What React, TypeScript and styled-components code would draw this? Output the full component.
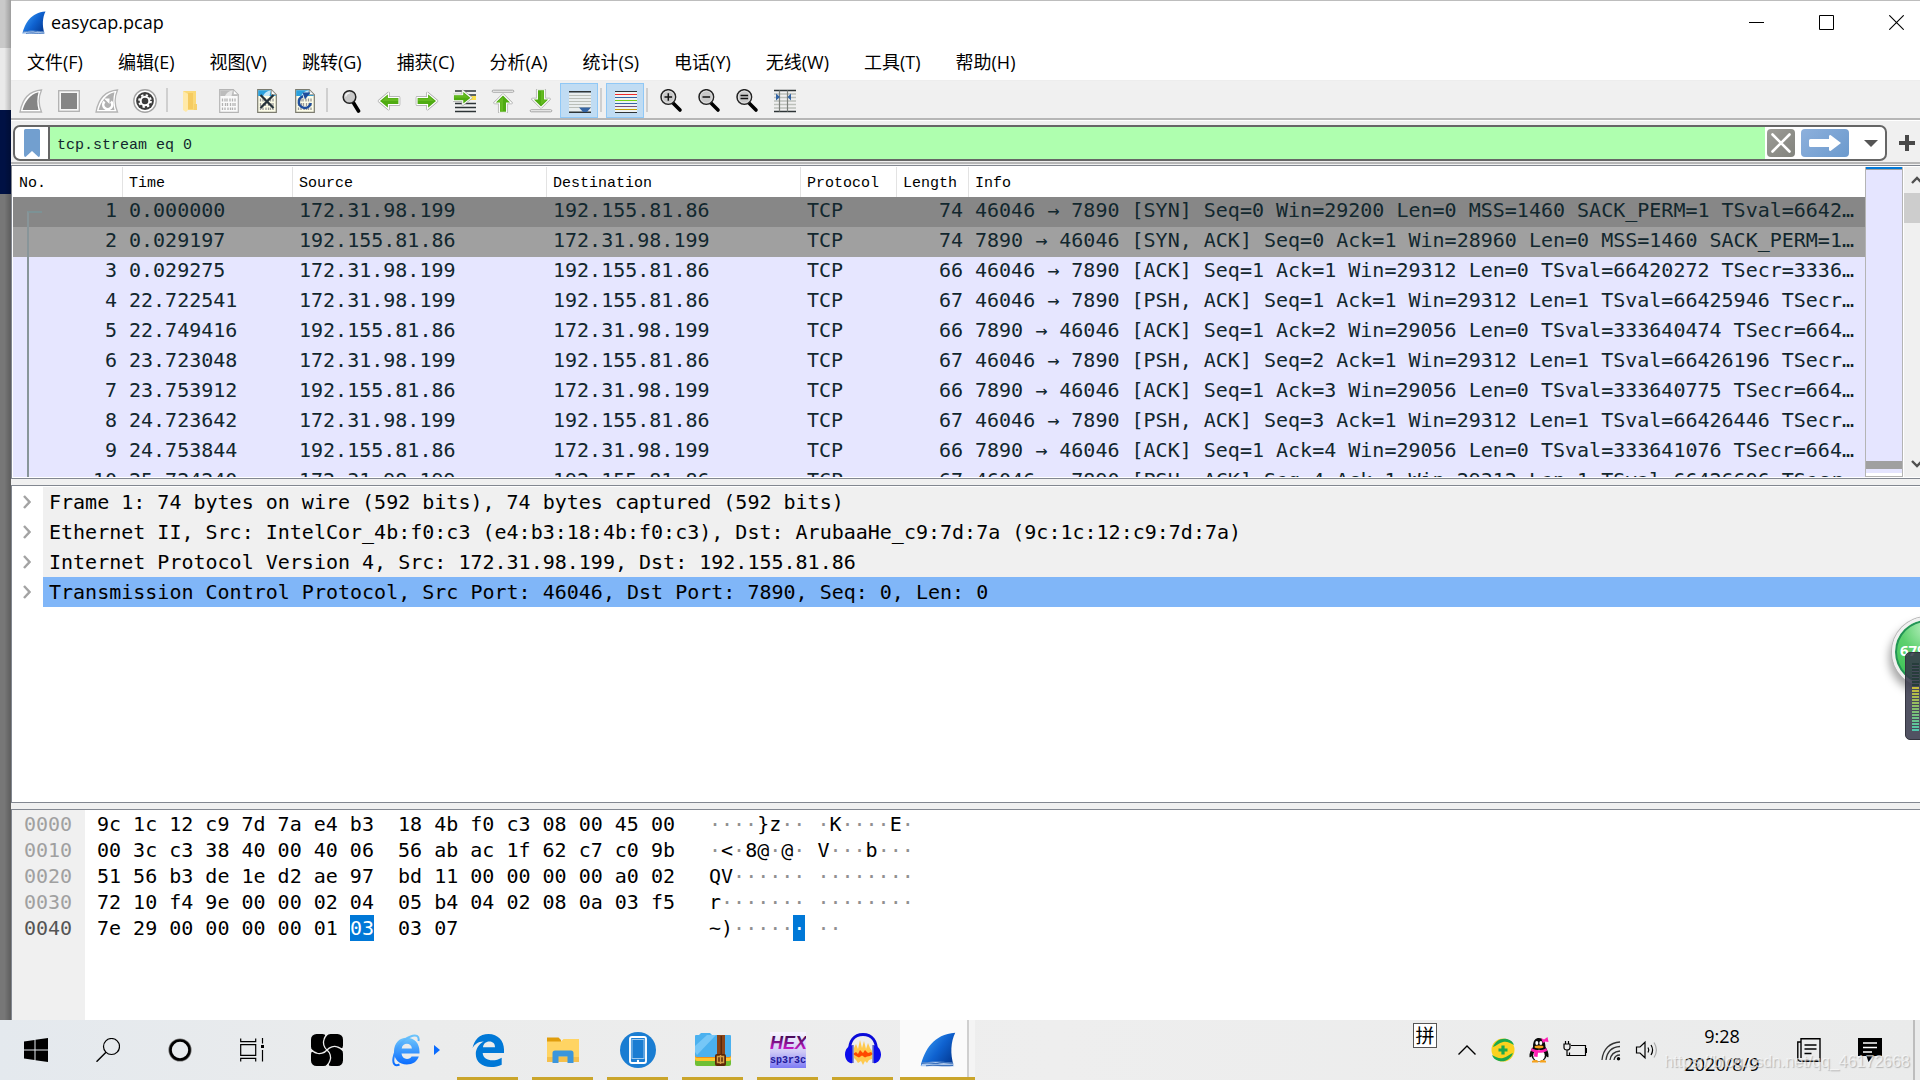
import React from "react";
import styled, { createGlobalStyle } from "styled-components";

const mono = `"DejaVu Sans Mono", "Liberation Mono", monospace`;
const ui = `"Open Sans", "Noto Sans", "Noto Sans CJK SC", sans-serif`;
const thin = `"Liberation Mono", "Noto Sans CJK SC", monospace`;

const GlobalStyle = createGlobalStyle`
  * { box-sizing: border-box; }
  body { margin: 0; overflow: hidden; font-family: ${ui}; font-size: 18px; color: #000; }
  button { border: 0; padding: 0; background: none; font: inherit; color: inherit; }
  svg { display: block; flex: none; }
`;

const Screen = styled.div`
  position: relative;
  display: flex;
  flex-direction: column;
  height: 100vh;
  overflow: hidden;
  background: #777;
`;

const Desk = styled.div`
  flex: 1;
  min-height: 0;
  display: flex;
`;

const Behind = styled.div`
  flex: none;
  width: 11px;
  background:
    linear-gradient(90deg, transparent 40%, rgba(0, 0, 0, 0.22)),
    linear-gradient(#c9c9c9 0 48px, #eaeaea 48px 110px, #001144 110px 194px, #777 194px);
`;

const Window = styled.main`
  flex: 1;
  min-width: 0;
  margin-right: -11px;
  display: flex;
  flex-direction: column;
  background: #fff;
  border-top: 1px solid #bdbdbd;
`;

const TitleBar = styled.header`
  flex: none;
  height: 43px;
  display: flex;
  align-items: center;
  padding-left: 11px;
`;

const Title = styled.h1`
  margin: 0 auto 0 5px;
  padding-bottom: 2px;
  font-size: 18px;
  line-height: 24px;
  font-weight: 400;
`;

const WindowButton = styled.button`
  width: 70px;
  height: 43px;
  display: grid;
  place-items: center;
`;

const MenuBar = styled.nav`
  flex: none;
  height: 37px;
  display: flex;
  align-items: center;
  border-bottom: 1px solid #ededed;
`;

const MenuButton = styled.button`
  padding: 0 19px 0 16px;
  line-height: 26px;
  white-space: nowrap;
`;

const ToolBar = styled.div`
  flex: none;
  display: flex;
  padding: 2px 1px 0;
  background: #f0f0f0;
  border-bottom: 2px solid #b6b6b6;
`;

const ToolButton = styled.button<{ $on?: boolean }>`
  width: 38px;
  height: 35px;
  display: grid;
  place-items: center;
  border: 1px solid ${(p) => (p.$on ? "#90c8f6" : "transparent")};
  background: ${(p) => (p.$on ? "#c0dcf3" : "transparent")};
`;

const ToolSeparator = styled.span`
  width: 2px;
  height: 24px;
  margin: 5px 4px 0 2px;
  background: #cfcfcf;
`;

const FilterBar = styled.form`
  flex: none;
  display: flex;
  align-items: center;
  padding: 4px 12px 1px 2px;
  background: #f0f0f0;
  border-top: 1px solid #fff;
  border-bottom: 2px solid #b6b6b6;
`;

const FilterBox = styled.div`
  flex: 1;
  height: 36px;
  display: flex;
  align-items: center;
  background: #fff;
  border: 2px solid #666;
  border-radius: 7px;
  overflow: hidden;
`;

const BookmarkButton = styled.button`
  width: 35px;
  height: 32px;
  display: grid;
  place-items: center;
  border-right: 2px solid #666;
`;

const FilterInput = styled.input`
  flex: 1;
  min-width: 0;
  height: 32px;
  padding: 5px 7px 0;
  border: 0;
  outline: 0;
  background: #afffaf;
  font: 15px/20px ${thin};
  color: #12272e;
`;

const BoxButton = styled.button<{ $w: number; $bg: string; $gap: number }>`
  width: ${(p) => p.$w}px;
  height: 28px;
  margin-left: ${(p) => p.$gap}px;
  border-radius: 4px;
  background: ${(p) => p.$bg};
  display: grid;
  place-items: center;
`;

const AddButton = styled.button`
  width: 24px;
  height: 32px;
  margin-left: 8px;
  display: grid;
  place-items: center;
`;

const Panes = styled.div`
  flex: 1;
  min-height: 0;
  display: flex;
  flex-direction: column;
  gap: 6px;
  padding-top: 1px;
  background: #f0f0f0;
`;

const Pane = styled.section<{ $share: number }>`
  flex: ${(p) => `${p.$share} 1 ${p.$share}px`};
  min-height: 0;
  overflow: hidden;
  background: #fff;
  border: 1px solid #828790;
  padding-top: 1px;
`;

const ListPane = styled(Pane)`
  display: flex;
  padding: 1px;
`;

const TableClip = styled.div`
  flex: 1;
  min-width: 0;
  overflow: hidden;
`;

const PacketTable = styled.table`
  width: 100%;
  table-layout: fixed;
  border-collapse: separate;
  border-spacing: 0;
  font: 20px/27px ${mono};
  color: #12272e;
`;

const Head = styled.th`
  height: 30px;
  padding: 3px 6px 0;
  border-right: 1px solid #e3e3e3;
  font: 15px/24px ${thin};
  color: #000;
  text-align: left;
  &:last-child { border-right: 0; }
`;

const PacketRow = styled.tr<{ $bg: string }>`
  background: ${(p) => p.$bg};
`;

const Cell = styled.td<{ $right?: boolean }>`
  height: 30px;
  padding: 0 6px 3px;
  text-align: ${(p) => (p.$right ? "right" : "left")};
  white-space: pre;
  overflow: hidden;
  text-overflow: ellipsis;
`;

const NumberCell = styled(Cell)<{ $first: boolean }>`
  position: relative;
  &::before {
    content: "";
    position: absolute;
    left: 14px;
    top: ${(p) => (p.$first ? 14 : 0)}px;
    bottom: 0;
    width: 13px;
    border-left: 2px solid #889599;
    border-top: ${(p) => (p.$first ? "2px solid #7c9295" : "0")};
  }
`;

const MiniMap = styled.div`
  flex: none;
  width: 38px;
  margin-right: 1px;
  background: #e5e5ff;
  border: 1px solid #b4b4b4;
  border-top: 0;
  display: flex;
  flex-direction: column;
  justify-content: space-between;
`;

const MapHead = styled.span`
  height: 3px;
  background: #0078d7;
  border-bottom: 1px solid #a0a0a0;
`;

const MapTail = styled.span`
  height: 15px;
  background: linear-gradient(#a0a0a0 0 8px, #e5e5ff 8px 12px, #fff 12px);
`;

const ScrollBar = styled.div`
  flex: none;
  width: 25px;
  display: flex;
  flex-direction: column;
  background: #f0f0f0;
`;

const ScrollButton = styled.button`
  height: 26px;
  display: grid;
  place-items: center;
`;

const ScrollThumb = styled.div`
  height: 30px;
  margin-bottom: auto;
  background: #cdcdcd;
`;

const Tree = styled.ul`
  margin: 0;
  padding: 0;
  list-style: none;
  font: 20px/30px ${mono};
`;

const TreeRow = styled.li`
  display: flex;
  height: 30px;
`;

const Expander = styled.button`
  width: 31px;
  padding-right: 2px;
  display: grid;
  place-items: center;
`;

const TreeText = styled.span<{ $selected: boolean }>`
  flex: 1;
  padding-left: 6px;
  background: ${(p) => (p.$selected ? "#80b6f8" : "#f0f0f0")};
  white-space: pre;
`;

const HexPane = styled(Pane)`
  display: flex;
  border-bottom: 0;
  font: 20px/26px ${mono};
  background: linear-gradient(90deg, #f0f0f0 73px, #fff 73px);
`;

const HexTable = styled.table`
  border-collapse: collapse;
  align-self: flex-start;
`;

const HexCell = styled.td<{ $w?: number; $tone?: string }>`
  height: 26px;
  width: ${(p) => (p.$w ? `${p.$w}px` : "auto")};
  padding: 0 0 0 12px;
  color: ${(p) => p.$tone || "#000"};
  white-space: pre;
`;

const Mark = styled.mark`
  display: inline-block;
  height: 26px;
  background: #0078d7;
  color: #fff;
`;

const Dim = styled.span`
  color: #909090;
`;

const TaskBar = styled.footer`
  flex: none;
  height: 60px;
  display: flex;
  background: linear-gradient(90deg, #e4e9ee, #ebecec 22%, #eeeeee 55%, #eaebeb);
`;

const TaskButton = styled.button<{ $w: number; $run?: boolean; $active?: boolean; $arrow?: boolean }>`
  width: ${(p) => p.$w}px;
  height: 60px;
  padding-right: ${(p) => (p.$arrow ? 10 : 0)}px;
  display: flex;
  align-items: center;
  justify-content: ${(p) => (p.$arrow ? "flex-end" : "center")};
  gap: 14px;
  background: ${(p) => {
    const line = "linear-gradient(#caa52b, #caa52b)";
    if (p.$active) return `${line} 0 100% / 100% 3px no-repeat, linear-gradient(90deg, #fafafa 67px, #cfcfcf 67px 69px, #f4f4f4 69px)`;
    return p.$run ? `${line} 50% 100% / 61px 3px no-repeat` : "none";
  }};
`;

const Tray = styled.div`
  margin-left: auto;
  display: flex;
  align-items: center;
`;

const ImeButton = styled.button`
  align-self: flex-start;
  width: 24px;
  height: 25px;
  margin: 3px 12px 0 0;
  border: 1px solid #555;
  background: #fff;
  font-size: 19px;
  line-height: 22px;
`;

const TrayButton = styled.button<{ $w: number }>`
  width: ${(p) => p.$w}px;
  height: 60px;
  display: grid;
  place-items: center;
`;

const Clock = styled.time`
  width: 114px;
  font-size: 18px;
  line-height: 28px;
  text-align: center;
`;

const ShowDesktop = styled.button`
  width: 7px;
  height: 60px;
  margin-left: 12px;
  border-left: 2px solid #bdbdbd;
`;

const Watermark = styled.span`
  position: absolute;
  right: 10px;
  bottom: 8px;
  font: 16px/20px "Liberation Sans", sans-serif;
  color: rgba(255, 255, 255, 0.6);
  text-shadow: 1px 1px 1px rgba(120, 120, 120, 0.45);
  pointer-events: none;
`;

const Ball = styled.div`
  position: absolute;
  right: -42px;
  top: 617px;
  width: 70px;
  height: 70px;
  padding-left: 5px;
  border: 3px solid #f0f0f0;
  border-radius: 50%;
  background: radial-gradient(circle at 50% 12%, #b9f0c0, #5dd06e 40%, #2fc04a);
  box-shadow: 0 0 0 1px #b5b5b5, inset 0 0 0 2px #239356, -3px 6px 9px rgba(0, 0, 0, 0.35);
  color: #fff;
  font: 700 15px/60px ${ui};
`;

const Meter = styled.div`
  position: absolute;
  right: -10px;
  top: 652px;
  width: 25px;
  height: 88px;
  padding: 10px 0 0 6px;
  border: 1px solid #34353f;
  border-radius: 5px;
  background: rgba(52, 54, 72, 0.86);
`;

const MeterBars = styled.div`
  width: 7px;
  height: 68px;
  background:
    repeating-linear-gradient(transparent 0 2px, #474a5b 2px 3px),
    linear-gradient(#263d3b 0 23px, #cbbb35 23px, #7fbf72 48px, #4fc7ae);
`;

const Fin = ({ size, id }: { size: number; id: string }) => (
  <svg width={size} height={size} viewBox="0 0 24 24" aria-hidden="true">
    <defs>
      <linearGradient id={id} x1="0" y1="0.2" x2="1" y2="0.9">
        <stop offset="0" stopColor="#3b9df5" />
        <stop offset="0.5" stopColor="#0f62d0" />
        <stop offset="1" stopColor="#02358c" />
      </linearGradient>
    </defs>
    <path d="M.5 22.500C3 12 9 1.500 23.500.5c-3 6-3.500 14-1 22Z" fill={`url(#${id})`} />
    <path d="M1.500 20.500c5-1 13-1 21 0l.3 2.500H.7Z" fill="#c9dcf4" opacity=".85" />
    <path d="M1 21c6-1.500 8 1 12-.4 4-1 6 .4 9 .2M4 22.500c5-1 10 .5 18-.3" stroke="#3c72bd" strokeWidth=".8" fill="none" />
  </svg>
);

const Svg24 = ({ children }: { children: React.ReactNode }) => (
  <svg width="24" height="24" viewBox="0 0 24 24" aria-hidden="true">{children}</svg>
);

const finPath = "M1 23C3 12 9 2 22.500 1c-3 7-3 15 0 22Z";
const finInner = "M3.600 21C6 13 10.500 5.500 19.500 3.300c-1.600 6-1.600 12 0 17.700Z";

const IconStart = () => (
  <Svg24><path d={finPath} fill="#fff" stroke="#b4b4b4" strokeWidth="1.300" /><path d={finInner} fill="#858585" /></Svg24>
);
const IconStop = () => (
  <Svg24><rect x="1.700" y="1.700" width="20.600" height="20.600" fill="#f8f8f8" stroke="#b0b0b0" strokeWidth="1.300" /><rect x="4" y="4" width="16" height="16" fill="#868686" /></Svg24>
);
const IconRestart = () => (
  <Svg24>
    <path d={finPath} fill="#fff" stroke="#b4b4b4" strokeWidth="1.300" />
    <path d={finInner} fill="#b0b0b0" />
    <path d="M9.500 12.500a4.500 4.500 0 1 0 6.500 0" fill="none" stroke="#fff" strokeWidth="2.600" />
    <path d="M9 9.500h5.500v5.500Z" fill="#fff" />
  </Svg24>
);
const IconOptions = () => (
  <Svg24>
    <circle cx="12" cy="12" r="11.200" fill="#fff" stroke="#a4a4a4" strokeWidth="1.400" />
    <circle cx="12" cy="12" r="8.900" fill="#3c3c3c" />
    <circle cx="12" cy="12" r="4.300" fill="none" stroke="#fff" strokeWidth="2" />
    <circle cx="12" cy="12" r="5.900" fill="none" stroke="#fff" strokeWidth="2" strokeDasharray="2.300 2.334" />
    <circle cx="12" cy="12" r="2.300" fill="#3c3c3c" />
  </Svg24>
);
const IconFolder = () => (
  <Svg24>
    <path d="M4 2h13v19H7Z" fill="#fad978" />
    <path d="M4 2l5 3v16l-2 2-3-2Z" fill="#ffe9a8" />
    <path d="M9 4h5v16H9Z" fill="#f5cb60" />
    <path d="M15 15h3v6h-3Z" fill="#f6d06c" />
  </Svg24>
);
const Digits = ({ c }: { c: string }) => (
  <path
    d="M5.500 9.500v3M8 9.500v3M10 9.500v3M13 9.500v3M15.500 9.500v3M18 9.500v3M5.500 14v3M8.500 14v3M10.500 14v3M13.500 14v3M16 14v3M18 14v3M5.500 18.500v2.500M8 18.500v2.500M11 18.500v2.500M13.500 18.500v2.500M15.500 18.500v2.500M18 18.500v2.500"
    stroke={c} strokeWidth="1.300" fill="none"
  />
);
const Doc = ({ gray, children }: { gray?: boolean; children?: React.ReactNode }) => (
  <Svg24>
    <path d="M2.700.7h13.600l5 5v17.600H2.700Z" fill={gray ? "#fafafa" : "#fdfde8"} stroke={gray ? "#b5b5b5" : "#7c7c70"} strokeWidth="1.200" />
    <path d="M3.200 1.200h13v4.500h4.500V7H3.200Z" fill={gray ? "#bcbcbc" : "#2aa0dd"} />
    <path d="M8 7c1-3 4-5 8-5.800L14.500 7Z" fill={gray ? "#e6e6e6" : "#c3e6f7"} />
    <path d="M16.300.7v5h5Z" fill="#fff" stroke={gray ? "#b5b5b5" : "#8d8d86"} strokeWidth=".9" />
    <Digits c={gray ? "#b3b3b3" : "#999"} />
    {children}
  </Svg24>
);
const IconClose = () => (
  <Doc><path d="M5.500 6l13 13M18.500 6l-13 13" stroke="#26323a" strokeWidth="2.300" /></Doc>
);
const IconReload = () => (
  <Doc>
    <path d="M10 7.200a6 6 0 1 0 7.700 6.800" fill="none" stroke="#1f4e9c" strokeWidth="2.500" />
    <path d="M9.500 3.500h8l-5.500 7Z" fill="#1f4e9c" />
  </Doc>
);
const Lens = ({ d, big }: { d?: string; big?: boolean }) => (
  <Svg24>
    <path d={big ? "M14 13l5.500 9" : "M14.500 14.500l6.500 6.500"} stroke="#000" strokeWidth="3.600" strokeLinecap="round" />
    <circle cx={big ? 10.500 : 9.300} cy="8" r={big ? 6.300 : 7.300} fill="#c9c9c9" stroke="#222" strokeWidth="1.500" />
    {!big && <circle cx="9.300" cy="8" r="5.900" fill="none" stroke="#dedede" strokeWidth="1" />}
    {big && <path d="M6.700 7.500a4 4 0 0 1 4-3.500" stroke="#f4f4f4" strokeWidth="1.600" fill="none" />}
    {d && <path d={d} stroke="#111" strokeWidth="1.500" />}
  </Svg24>
);
const arrowRight = "M2 8.500h10.500V4L22 12l-9.500 8v-4.500H2Z";
const ArrowShape = ({ t }: { t?: string }) => (
  <g transform={t}>
    <path d={arrowRight} fill="#fff" stroke="#a6a6a6" strokeWidth="2.600" strokeLinejoin="round" />
    <path d={arrowRight} fill="#4fab12" stroke="#fff" strokeWidth="1.200" />
    <path d="M3 9.500h10.500V6.500L19 12H3Z" fill="#72c52a" opacity=".6" />
  </g>
);
const IconGoto = () => (
  <Svg24>
    <path d="M2 2h21M2 6h21M2 14.500h21M2 18.500h21M2 22.500h21M12 10h11" stroke="#2d3436" strokeWidth="1.300" />
    <path d="M15 7h8v4h-8Z" fill="#fbe04a" />
    <ArrowShape t="translate(-1.500 -1.500) scale(.9 .86)" />
  </Svg24>
);
const IconTop = () => (
  <Svg24>
    <ArrowShape t="translate(-.6 25) rotate(-90) scale(.88 1.050)" />
    <rect x="1.200" y="1.200" width="21.600" height="2" rx="1" fill="#fff" stroke="#a0a0a0" />
  </Svg24>
);
const IconBottom = () => (
  <Svg24>
    <ArrowShape t="translate(24.600 -1) rotate(90) scale(.88 1.050)" />
    <rect x="1.200" y="20.800" width="21.600" height="2" rx="1" fill="#fff" stroke="#a0a0a0" />
  </Svg24>
);
const IconAutoScroll = () => (
  <Svg24>
    <path d="M2 3.500h22v20H2Z" fill="#e9eeee" />
    <path d="M2 6.500h22M2 9.500h22M2 12.500h22M2 15.500h22M2 18.500h22" stroke="#b9beb8" strokeWidth="1.200" />
    <path d="M2 2.700h22M2 23.300h22" stroke="#2d3436" strokeWidth="1.400" />
    <path d="M12 18.500h12L20 23h-4Z" fill="#3465a4" />
  </Svg24>
);
const IconColorize = () => (
  <Svg24>
    <path d="M2 2.700h22v20.600H2Z" fill="#eef2f4" />
    {["#2d3436", "#ef2929", "#3465a4", "#73d216", "#3465a4", "#75507b", "#c4a000", "#2d3436"].map((c, i) => (
      <path key={i} d={`M2 ${2.5 + i * 3}h22`} stroke={c} strokeWidth="1" shapeRendering="crispEdges" />
    ))}
  </Svg24>
);
const IconResize = () => (
  <Svg24>
    <path d="M1 1.500h22M1 22.500h22" stroke="#2d3436" strokeWidth="1.300" />
    <path d="M1 5h22M1 8.500h22M1 12h22M1 15.500h22M1 19h22" stroke="#bcc0ba" strokeWidth="1.300" />
    <path d="M6.500 1.500v21M14.500 1.500v21" stroke="#7d817c" strokeWidth="1.200" />
    <path d="M3 4.500l4 3.500-4 3.500ZM18 4.500L14.500 8l3.500 3.500Z" fill="#3465a4" />
  </Svg24>
);

const tools: Array<[string, React.ReactNode, boolean?] | null> = [
  ["开始捕获", <IconStart />],
  ["停止捕获", <IconStop />],
  ["重新开始", <IconRestart />],
  ["捕获选项", <IconOptions />],
  null,
  ["打开", <IconFolder />],
  ["保存", <Doc gray />],
  ["关闭文件", <IconClose />],
  ["重新加载", <IconReload />],
  null,
  ["查找", <Lens big />],
  ["后退", <Svg24><ArrowShape t="translate(24 0) scale(-1 1)" /></Svg24>],
  ["前进", <Svg24><ArrowShape /></Svg24>],
  ["转到分组", <IconGoto />],
  ["首个分组", <IconTop />],
  ["最新分组", <IconBottom />],
  ["自动滚动", <IconAutoScroll />, true],
  null,
  ["着色", <IconColorize />, true],
  null,
  ["放大", <Lens d="M5.500 8h7.600M9.300 4.200v7.600" />],
  ["缩小", <Lens d="M5.500 8h7.600" />],
  ["正常大小", <Lens d="M5.500 6.500h7.600M5.500 9.500h7.600" />],
  ["调整列宽", <IconResize />],
];

const menus = ["文件(F)", "编辑(E)", "视图(V)", "跳转(G)", "捕获(C)", "分析(A)", "统计(S)", "电话(Y)", "无线(W)", "工具(T)", "帮助(H)"];

const columns: Array<[string, number | undefined]> = [
  ["No.", 110], ["Time", 170], ["Source", 254], ["Destination", 254], ["Protocol", 96], ["Length", 72], ["Info", undefined],
];

const A = "172.31.98.199";
const B = "192.155.81.86";
const packets = [
  ["1", "0.000000", A, B, "74", "46046 → 7890 [SYN] Seq=0 Win=29200 Len=0 MSS=1460 SACK_PERM=1 TSval=6642…"],
  ["2", "0.029197", B, A, "74", "7890 → 46046 [SYN, ACK] Seq=0 Ack=1 Win=28960 Len=0 MSS=1460 SACK_PERM=1…"],
  ["3", "0.029275", A, B, "66", "46046 → 7890 [ACK] Seq=1 Ack=1 Win=29312 Len=0 TSval=66420272 TSecr=3336…"],
  ["4", "22.722541", A, B, "67", "46046 → 7890 [PSH, ACK] Seq=1 Ack=1 Win=29312 Len=1 TSval=66425946 TSecr…"],
  ["5", "22.749416", B, A, "66", "7890 → 46046 [ACK] Seq=1 Ack=2 Win=29056 Len=0 TSval=333640474 TSecr=664…"],
  ["6", "23.723048", A, B, "67", "46046 → 7890 [PSH, ACK] Seq=2 Ack=1 Win=29312 Len=1 TSval=66426196 TSecr…"],
  ["7", "23.753912", B, A, "66", "7890 → 46046 [ACK] Seq=1 Ack=3 Win=29056 Len=0 TSval=333640775 TSecr=664…"],
  ["8", "24.723642", A, B, "67", "46046 → 7890 [PSH, ACK] Seq=3 Ack=1 Win=29312 Len=1 TSval=66426446 TSecr…"],
  ["9", "24.753844", B, A, "66", "7890 → 46046 [ACK] Seq=1 Ack=4 Win=29056 Len=0 TSval=333641076 TSecr=664…"],
  ["10", "25.724240", A, B, "67", "46046 → 7890 [PSH, ACK] Seq=4 Ack=1 Win=29312 Len=1 TSval=66426696 TSecr…"],
];

const details = [
  "Frame 1: 74 bytes on wire (592 bits), 74 bytes captured (592 bits)",
  "Ethernet II, Src: IntelCor_4b:f0:c3 (e4:b3:18:4b:f0:c3), Dst: ArubaaHe_c9:7d:7a (9c:1c:12:c9:7d:7a)",
  "Internet Protocol Version 4, Src: 172.31.98.199, Dst: 192.155.81.86",
  "Transmission Control Protocol, Src Port: 46046, Dst Port: 7890, Seq: 0, Len: 0",
];

const dump = [
  ["0000", "9c 1c 12 c9 7d 7a e4 b3  18 4b f0 c3 08 00 45 00", "····}z·· ·K····E·"],
  ["0010", "00 3c c3 38 40 00 40 06  56 ab ac 1f 62 c7 c0 9b", "·<·8@·@· V···b···"],
  ["0020", "51 56 b3 de 1e d2 ae 97  bd 11 00 00 00 00 a0 02", "QV······ ········"],
  ["0030", "72 10 f4 9e 00 00 02 04  05 b4 04 02 08 0a 03 f5", "r······· ········"],
  ["0040", "7e 29 00 00 00 00 01 03  03 07", "~)······ ··"],
];

const withDots = (s: string) =>
  s.split(/(·+)/).map((part, i) => (part.startsWith("·") ? <Dim key={i}>{part}</Dim> : part));

const marked = (s: string, from: number, to: number, dots: boolean) => (
  <>
    {dots ? withDots(s.slice(0, from)) : s.slice(0, from)}
    <Mark>{s.slice(from, to)}</Mark>
    {dots ? withDots(s.slice(to)) : s.slice(to)}
  </>
);

const Chevron = ({ d }: { d: string }) => (
  <svg width="14" height="14" viewBox="0 0 14 14" aria-hidden="true">
    <path d={d} fill="none" stroke="#505050" strokeWidth="2.400" />
  </svg>
);

const TaskIcon = ({ size = 36, children }: { size?: number; children: React.ReactNode }) => (
  <svg width={size} height={size} viewBox="0 0 36 36" aria-hidden="true">{children}</svg>
);

const WindowsLogo = () => (
  <Svg24><path d="M0 3.400l10.500-1.400v9.500H0ZM11.500 1.800L24 0v11.500H11.500ZM0 12.500h10.500V22L0 20.600ZM11.500 12.500H24V24l-12.500-1.800Z" /></Svg24>
);
const SearchGlyph = () => (
  <Svg24><circle cx="15.500" cy="8.500" r="8" fill="none" stroke="#000" strokeWidth="1.200" /><path d="M10 14.200L.5 23.700" stroke="#000" strokeWidth="1.500" /></Svg24>
);
const Cortana = () => (
  <Svg24><circle cx="12" cy="12" r="10.600" fill="none" stroke="#777" strokeWidth="2" /><circle cx="12" cy="12" r="9.500" fill="none" stroke="#000" strokeWidth="2.600" /></Svg24>
);
const TaskView = () => (
  <Svg24>
    <path d="M.7.5v3.200h15V.5M.7 23.500v-3.200h15v3.200M.7 6.700h15v10.600H.7ZM22.500 0v5.500M22.500 12v11.500" fill="none" stroke="#000" strokeWidth="1.200" />
    <rect x="21" y="7" width="3" height="3" />
  </Svg24>
);
const Swirl = () => (
  <TaskIcon>
    {[0, 90, 180, 270].map((r) => (
      <rect key={r} transform={`rotate(${r} 18 18)`} x="16" y="2" width="18" height="17" rx="5.500" />
    ))}
    {[0, 90, 180, 270].map((r) => (
      <g key={r} transform={`rotate(${r} 18 18)`}>
        <path d="M18 18C15 15.500 13.500 11 15 7.500 15.500 5.500 16.500 4 18 2.500" fill="none" stroke="#ececec" strokeWidth="1.300" />
        <path d="M15.500 1h4.500l-3.500 4Z" fill="#ececec" />
      </g>
    ))}
  </TaskIcon>
);
const IE = () => (
  <svg width="28" height="34" viewBox="0 0 28 34" aria-hidden="true">
    <defs><linearGradient id="ie" x1="0" y1="0" x2="0" y2="1"><stop offset="0" stopColor="#6cc4fb" /><stop offset="1" stopColor="#0a6cff" /></linearGradient></defs>
    <path fillRule="evenodd" fill="url(#ie)" d="M2 18.500C2 10 7.500 4.800 14.500 4.800c8 0 13 5.700 13 13.700v2H9.500c.4 3.600 2.500 5.400 5.500 5.400 2.300 0 3.800-1 4.600-2.500h7.200c-1.600 5-6.200 8-12 8C7 31.400 2 26.500 2 18.500Zm7.700-3.100h10.200c-.4-3-2.300-4.600-5-4.600s-4.700 1.600-5.200 4.600Z" />
    <path d="M26.500 8c1-5-2.500-7-8-4.500C10 7 3 16 1.500 25c-1 6 1.500 8.500 6 6.500" fill="none" stroke="url(#ie)" strokeWidth="2" />
  </svg>
);
const EdgeLogo = () => (
  <TaskIcon>
    <path fill="#0078d7" d="M2.500 16.500C4 8 9.500 2 18.500 2 28 2 34 9 34 17.500V21H12.700c.3 5 4.600 7.300 9.500 7.300 3.700 0 6.800-1 9.500-2.600v7C28.500 34.300 25 35 21 35 11.500 35 5.800 29.500 5.800 22c0-5 3-9.700 8-12.400C7.500 9.500 4.200 13 2.500 16.500ZM13 15.300h12c0-3.500-2-5.700-5.600-5.700S13.300 12 13 15.300Z" />
  </TaskIcon>
);
const Explorer = () => (
  <TaskIcon>
    <path d="M2 5.500h11.500L16 8v4H2Z" fill="#e09d0c" />
    <path d="M2 9.500h14L18.500 7H34v23H2Z" fill="#ffd463" />
    <path d="M2 25h32v5H2Z" fill="#f5c04b" />
    <path d="M7.500 31V21q0-2.500 2.500-2.500h16q2.500 0 2.500 2.500v10h-6v-6.500h-9V31Z" fill="#3a96dd" />
  </TaskIcon>
);
const Phone = () => (
  <TaskIcon>
    <circle cx="18" cy="18" r="18" fill="#1a7dd2" />
    <rect x="10" y="5" width="16" height="26" rx="2" fill="#1a7dd2" stroke="#fff" strokeWidth="1.900" />
    <rect x="12" y="7.500" width="12" height="19" fill="none" stroke="#9cc9ee" />
    <circle cx="18" cy="29" r="1.200" fill="#fff" />
  </TaskIcon>
);
const Archive = () => (
  <TaskIcon>
    <rect y="24" width="36" height="10" rx="2" fill="#6fbf35" />
    <rect y="22" width="36" height="7" rx="2" fill="#ffc52e" />
    <rect y="20" width="36" height="6" rx="2" fill="#f39117" />
    <path d="M0 4q0-1 1-1h3l2-2h9l2 2h18q1 0 1 1v19q0 2-2 2H2q-2 0-2-2Z" fill="#4bb1ef" />
    <path d="M0 14L12 3h9L2 23l-2-3Z" fill="#8dd3fa" opacity=".65" />
    <rect x="22" y="3" width="8" height="21" fill="#8a4518" />
    <rect x="25.500" y="4" width="1.500" height="18" fill="#5a280a" />
    <rect x="20" y="22" width="11" height="12" rx="2" fill="#5b2808" />
    <path d="M22.500 24.500h6v6h-6ZM25.500 23v9" fill="none" stroke="#d6a046" strokeWidth="1.500" />
  </TaskIcon>
);
const HexLogo = () => (
  <TaskIcon>
    <defs>
      <linearGradient id="hx" x1="0" y1="0" x2="0" y2="1"><stop offset="0" stopColor="#f7f4ff" /><stop offset=".55" stopColor="#cfc9f6" /><stop offset="1" stopColor="#7d7bf5" /></linearGradient>
      <linearGradient id="ht" x1="0" y1="0" x2="0" y2="1"><stop offset=".2" stopColor="#4b0a5c" /><stop offset="1" stopColor="#ee1be8" /></linearGradient>
    </defs>
    <rect width="36" height="36" fill="url(#hx)" />
    <text x="0" y="17" fontFamily="Liberation Sans" fontWeight="700" fontStyle="italic" fontSize="18" fill="url(#ht)">HEX</text>
    <text x="0" y="31" fontFamily="Liberation Mono" fontWeight="700" fontSize="10" fill="#241a9c">sp3r3c</text>
  </TaskIcon>
);
const Audacity = () => (
  <TaskIcon>
    <path d="M9 26V16l2-4 2 5 2-9 2 8 2-7 2 8 2-6 2 5 2 3v8l-3 1-2 3-2-2-2 4-2-4-3 2-2-3Z" fill="#ffc94d" />
    <path d="M8 22l3-2 2 2 2-4 3 3 2-3 3 3 3-1 2 2-3 2-3 .5-2 1-3-2-3 2-3-1.500Z" fill="#ff4a00" />
    <path d="M4.500 20C4 9 9 2.500 18 2.500S32 9 31.500 20" fill="none" stroke="#0a0ad8" strokeWidth="2.800" />
    <path d="M8 13v18C3 32 0 27 0 22.500 0 17 4 13 8 13ZM28 13v18c5 1 8-4 8-8.500C36 17 32 13 28 13Z" fill="#0c0cec" />
    <path d="M8 13v18M28 13v18" stroke="#6d74c8" strokeWidth="1.500" />
  </TaskIcon>
);

const tasks: Array<[string, React.ReactNode]> = [
  ["Edge", <EdgeLogo />],
  ["资源管理器", <Explorer />],
  ["手机", <Phone />],
  ["压缩", <Archive />],
  ["HEX", <HexLogo />],
  ["Audacity", <Audacity />],
];

const Guard = () => (
  <Svg24>
    <circle cx="12" cy="12" r="11.500" fill="#fbd21e" />
    <path d="M2 9C4 3 10-.5 16 1c4 1 6 3 7 6-4-2-7-4-11-3S5 8 2 9ZM22 15c-2 6-8 9.500-14 8-4-1-6-3-7-6 4 2 7 4 11 3s7-4 10-5Z" fill="#1ca84c" />
    <path d="M12 7.500v9M7.500 12h9" stroke="#1ca84c" strokeWidth="3.200" />
  </Svg24>
);
const Penguin = () => (
  <svg width="20" height="26" viewBox="0 0 20 26" aria-hidden="true">
    <path d="M4 10C4 3 6.500 1 10 1s6.500 3 6.500 9c2 3 3.500 6.500 3 10-1 1-2-1-2-1-1 4-4 5.500-7.500 5.500S3.500 23 2.500 19c0 0-1 2-2 1-.5-4 1.500-7 3.500-10Z" fill="#0a0a0a" />
    <ellipse cx="10" cy="18.500" rx="5.800" ry="5.800" fill="#fff" />
    <ellipse cx="7.800" cy="6" rx="1.500" ry="2" fill="#fff" /><ellipse cx="11.800" cy="6" rx="1.500" ry="2" fill="#fff" />
    <ellipse cx="10" cy="10" rx="4.500" ry="1.400" fill="#f6a21b" />
    <path d="M2.500 11c5 3 10 3 15 0l.5 3c-3 1.500-6 2-9 1.800L8.500 20 5 19.500l.3-4.300L2 14Z" fill="#ff1fb4" />
    <path d="M12 1l3 1.500L18.500 0l1 5-3.500-.5-2 1.500Z" fill="#ff1fb4" />
    <path d="M3 24c2-1.500 5-1.500 6.500.5l-.5 1H3ZM17 24c-2-1.500-5-1.500-6.500.5l.5 1h6Z" fill="#f6a21b" />
  </svg>
);
const Battery = () => (
  <Svg24>
    <path d="M8 7.500h14.500v10H6.500v-3M22.500 10.500h1.200v4h-1.200M1 6h6v3.500Q7 12 4 12T1 9.500ZM2.500 6V3M5.500 6V3M4 12v5.500h2.500" fill="none" stroke="#000" strokeWidth="1.200" />
  </Svg24>
);
const Wifi = () => (
  <Svg24>
    <path d="M3 22C4 11 11 4.500 21 4M7 22c1-8 6-13 14-13.500M11 22c.7-5 4.500-8.500 10-9" fill="none" stroke="#333" strokeWidth="1.300" />
    <path d="M15 22c.5-3 2.500-5 6-5" fill="none" stroke="#333" strokeWidth="1.300" />
    <circle cx="19.500" cy="20.800" r="1.700" />
  </Svg24>
);
const Volume = () => (
  <Svg24>
    <path d="M1.500 9h3.500l5-4.800v15.600L5 15H1.500Z" fill="none" stroke="#000" strokeWidth="1.200" />
    <path d="M13 9.500q1.600 2.500 0 5M16 7q3.200 5 0 10" fill="none" stroke="#000" strokeWidth="1.200" />
    <path d="M19 4.500q4.800 7.500 0 15" fill="none" stroke="#aaa" strokeWidth="1.200" />
  </Svg24>
);
const News = () => (
  <Svg24>
    <path d="M4 .8h19v22.400H3.500Q.8 23.200.8 20V4H4ZM4 4v16" fill="none" stroke="#000" strokeWidth="1.400" />
    <path d="M7.500 7h12M7.500 11h12M7.500 15.500h7" stroke="#000" strokeWidth="1.400" />
  </Svg24>
);
const Notice = () => (
  <Svg24>
    <path d="M0 0h24v18h-8.500l-5 6L8.500 18H0Z" />
    <path d="M5 5h14M5 9.500h14M5 14h9" stroke="#fff" strokeWidth="1.300" />
  </Svg24>
);

export default function App() {
  return (
    <Screen>
      <GlobalStyle />
      <Desk>
        <Behind />
        <Window>
          <TitleBar>
            <Fin size={24} id="finSmall" />
            <Title>easycap.pcap</Title>
            <WindowButton aria-label="最小化">
              <svg width="15" height="15" viewBox="0 0 15 15"><path d="M0 7.500h15" stroke="#000" /></svg>
            </WindowButton>
            <WindowButton aria-label="最大化">
              <svg width="15" height="15" viewBox="0 0 15 15"><path d="M.5.5h14v14H.5Z" fill="none" stroke="#000" /></svg>
            </WindowButton>
            <WindowButton aria-label="关闭">
              <svg width="15" height="15" viewBox="0 0 15 15"><path d="M.3.3l14.400 14.400M14.700.3L.3 14.700" stroke="#000" strokeWidth="1.100" /></svg>
            </WindowButton>
          </TitleBar>
          <MenuBar>{menus.map((m) => <MenuButton key={m}>{m}</MenuButton>)}</MenuBar>
          <ToolBar>
            {tools.map((t, i) =>
              t ? <ToolButton key={i} aria-label={t[0]} $on={t[2]}>{t[1]}</ToolButton> : <ToolSeparator key={i} />
            )}
          </ToolBar>
          <FilterBar onSubmit={(e) => e.preventDefault()}>
            <FilterBox>
              <BookmarkButton type="button" aria-label="书签">
                <svg width="16" height="28" viewBox="0 0 16 28"><path d="M0 1.500Q0 0 1.500 0h13Q16 0 16 1.500V26q0 2-1.500 2L8 22 1.500 28Q0 28 0 26Z" fill="#729fcf" /></svg>
              </BookmarkButton>
              <FilterInput aria-label="显示过滤器" defaultValue="tcp.stream eq 0" spellCheck={false} />
              <BoxButton type="button" aria-label="清除" $w={28} $gap={2} $bg="linear-gradient(135deg, #9c9c97, #82837d)">
                <svg width="20" height="20" viewBox="0 0 20 20"><path d="M1.500 1.500l17 17M18.500 1.500l-17 17" stroke="#fff" strokeWidth="2.600" strokeLinecap="round" /></svg>
              </BoxButton>
              <BoxButton type="submit" aria-label="应用" $w={48} $gap={6} $bg="linear-gradient(135deg, #8db0dc, #6c9acd)">
                <svg width="32" height="16" viewBox="0 0 32 16"><path d="M1.500 4H20V1.200Q20 0 21.500 0L32 8l-10.500 8Q20 16 20 14.800V12H1.500Q0 12 0 10.500v-5Q0 4 1.500 4Z" fill="#fff" /></svg>
              </BoxButton>
              <BoxButton type="button" aria-label="历史" $w={28} $gap={8} $bg="none">
                <svg width="14" height="7" viewBox="0 0 14 7"><path d="M0 0h14L7 7Z" fill="#555" /></svg>
              </BoxButton>
            </FilterBox>
            <AddButton type="button" aria-label="添加">
              <svg width="16" height="16" viewBox="0 0 16 16"><path d="M8 0v16M0 8h16" stroke="#484848" strokeWidth="4" /></svg>
            </AddButton>
          </FilterBar>
          <Panes>
            <ListPane $share={314}>
              <TableClip>
                <PacketTable>
                  <colgroup>
                    {columns.map(([name, w]) => <col key={name} width={w} />)}
                  </colgroup>
                  <thead>
                    <tr>{columns.map(([name]) => <Head key={name}>{name}</Head>)}</tr>
                  </thead>
                  <tbody>
                    {packets.map(([no, time, src, dst, len, info], i) => (
                      <PacketRow key={no} $bg={i === 0 ? "#878787" : i === 1 ? "#a0a0a0" : "#e6e6ff"}>
                        <NumberCell $right $first={i === 0}>{no}</NumberCell>
                        <Cell>{time}</Cell>
                        <Cell>{src}</Cell>
                        <Cell>{dst}</Cell>
                        <Cell>TCP</Cell>
                        <Cell $right>{len}</Cell>
                        <Cell>{info}</Cell>
                      </PacketRow>
                    ))}
                  </tbody>
                </PacketTable>
              </TableClip>
              <MiniMap><MapHead /><MapTail /></MiniMap>
              <ScrollBar>
                <ScrollButton aria-label="向上"><Chevron d="M2 10l5-5 5 5" /></ScrollButton>
                <ScrollThumb />
                <ScrollButton aria-label="向下"><Chevron d="M2 4l5 5 5-5" /></ScrollButton>
              </ScrollBar>
            </ListPane>
            <Pane $share={318}>
              <Tree>
                {details.map((d, i) => (
                  <TreeRow key={d}>
                    <Expander aria-label="展开">
                      <svg width="8" height="14" viewBox="0 0 8 14"><path d="M1 1l5.500 6L1 13" fill="none" stroke="#a3a3a3" strokeWidth="2.400" /></svg>
                    </Expander>
                    <TreeText $selected={i === 3}>{d}</TreeText>
                  </TreeRow>
                ))}
              </Tree>
            </Pane>
            <HexPane $share={211}>
              <HexTable>
                <tbody>
                  {dump.map(([off, bytes, text], i) => (
                    <tr key={off}>
                      <HexCell $w={73} $tone={i === 4 ? "#555" : "#a0a0a0"}>{off}</HexCell>
                      <HexCell $w={612}>{i === 4 ? marked(bytes, 21, 23, false) : bytes}</HexCell>
                      <HexCell>{i === 4 ? marked(text, 7, 8, true) : withDots(text)}</HexCell>
                    </tr>
                  ))}
                </tbody>
              </HexTable>
            </HexPane>
          </Panes>
        </Window>
      </Desk>
      <TaskBar>
        <TaskButton $w={72} aria-label="开始"><WindowsLogo /></TaskButton>
        <TaskButton $w={72} aria-label="搜索"><SearchGlyph /></TaskButton>
        <TaskButton $w={72} aria-label="Cortana"><Cortana /></TaskButton>
        <TaskButton $w={72} aria-label="任务视图"><TaskView /></TaskButton>
        <TaskButton $w={78} aria-label="启动器"><Swirl /></TaskButton>
        <TaskButton $w={84} $arrow aria-label="Internet Explorer">
          <IE />
          <svg width="6" height="10" viewBox="0 0 6 10"><path d="M0 0l6 5-6 5Z" fill="#0a6cff" /></svg>
        </TaskButton>
        {tasks.map(([name, icon]) => <TaskButton key={name} $w={75} $run aria-label={name}>{icon}</TaskButton>)}
        <TaskButton $w={75} $run $active aria-label="Wireshark"><Fin size={36} id="finLarge" /></TaskButton>
        <Tray>
          <ImeButton>拼</ImeButton>
          <TrayButton $w={36} aria-label="更多">
            <svg width="18" height="10" viewBox="0 0 18 10"><path d="M.5 9.500L9 1l8.500 8.500" fill="none" stroke="#000" strokeWidth="1.400" /></svg>
          </TrayButton>
          <TrayButton $w={36} aria-label="360"><Guard /></TrayButton>
          <TrayButton $w={36} aria-label="QQ"><Penguin /></TrayButton>
          <TrayButton $w={36} aria-label="电池"><Battery /></TrayButton>
          <TrayButton $w={36} aria-label="网络"><Wifi /></TrayButton>
          <TrayButton $w={36} aria-label="音量"><Volume /></TrayButton>
          <Clock>9:28<br />2020/8/9</Clock>
          <TrayButton $w={60} aria-label="资讯"><News /></TrayButton>
          <TrayButton $w={62} aria-label="通知"><Notice /></TrayButton>
          <ShowDesktop aria-label="显示桌面" />
        </Tray>
      </TaskBar>
      <Ball>67%</Ball>
      <Meter><MeterBars /></Meter>
      <Watermark>https://blog.csdn.net/qq_46172668</Watermark>
    </Screen>
  );
}
